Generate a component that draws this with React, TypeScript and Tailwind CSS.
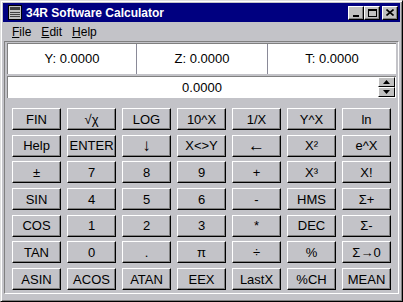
const stack = ["Y: 0.0000", "Z: 0.0000", "T: 0.0000"];

const keys: string[][] = [
  ["FIN", "√χ", "LOG", "10^X", "1/X", "Y^X", "ln"],
  ["Help", "ENTER", "↓", "X<>Y", "←", "X²", "e^X"],
  ["±", "7", "8", "9", "+", "X³", "X!"],
  ["SIN", "4", "5", "6", "-", "HMS", "Σ+"],
  ["COS", "1", "2", "3", "*", "DEC", "Σ-"],
  ["TAN", "0", ".", "π", "÷", "%", "Σ→0"],
  ["ASIN", "ACOS", "ATAN", "EEX", "LastX", "%CH", "MEAN"],
];

// arrows are drawn larger than the other labels in the original
const bigLabels = ["↓", "←"];

function CaptionButton({ children }: { children: React.ReactNode }) {
  return (
    <div className="flex h-[14px] w-[16px] items-center justify-center border border-t-white border-l-white border-r-black border-b-black bg-[#c0c0c0] shadow-[inset_-1px_-1px_#808080]">
      {children}
    </div>
  );
}

function AppIcon() {
  return (
    <svg width="14" height="15" viewBox="0 0 14 15" className="shrink-0">
      <rect x="0.5" y="0.5" width="13" height="14" fill="#c0c0c0" stroke="#000" />
      <rect x="2" y="2" width="10" height="3" fill="#404040" />
      <line x1="2" y1="7.5" x2="12" y2="7.5" stroke="#404040" />
      <line x1="2" y1="9.5" x2="12" y2="9.5" stroke="#404040" />
      <line x1="2" y1="11.5" x2="12" y2="11.5" stroke="#404040" />
    </svg>
  );
}

function Key({ label }: { label: string }) {
  const size = bigLabels.includes(label) ? "text-[17px]" : "text-[13px]";
  return (
    <div
      className={`flex h-[22px] items-center justify-center border border-t-white border-l-white border-r-black border-b-black bg-[#c3c3c8] leading-none text-black shadow-[inset_-1px_-1px_#808080] ${size}`}
    >
      {label}
    </div>
  );
}

export default function App() {
  return (
    <div
      className="flex h-[302px] w-[403px] flex-col border border-t-[#dfdfdf] border-l-[#dfdfdf] border-r-black border-b-black bg-[#c3c3c8] p-[2px] shadow-[inset_1px_1px_#fff,inset_-1px_-1px_#808080]"
      style={{ fontFamily: '"Liberation Sans", Arial, sans-serif' }}
    >
      <div className="flex h-[19px] shrink-0 items-center bg-[#000080] pl-[5px] pr-[2px]">
        <AppIcon />
        <span className="ml-[4px] text-[12px] font-bold text-white">34R Software Calculator</span>
        <div className="ml-auto flex items-center">
          <CaptionButton>
            <div className="mt-[6px] h-[2px] w-[6px] bg-black" />
          </CaptionButton>
          <CaptionButton>
            <div className="h-[8px] w-[9px] border border-t-2 border-black" />
          </CaptionButton>
          <div className="ml-[2px]">
            <CaptionButton>
              <svg width="8" height="7" viewBox="0 0 8 7">
                <path d="M0.5 0.5 L7.5 6.5 M7.5 0.5 L0.5 6.5" stroke="#000" strokeWidth="1.6" />
              </svg>
            </CaptionButton>
          </div>
        </div>
      </div>

      <div className="flex h-[19px] shrink-0 items-center gap-[10px] pl-[9px] text-[12px] text-black">
        <span><span className="underline">F</span>ile</span>
        <span><span className="underline">E</span>dit</span>
        <span><span className="underline">H</span>elp</span>
      </div>

      <div className="mx-[1px] mb-[5px] flex flex-1 flex-col border border-t-[#808080] border-l-[#808080] border-r-white border-b-white px-[2px] pt-[1px]">
        <div className="grid h-[31px] grid-cols-[129px_131px_1fr] border-t border-l border-[#808080] bg-white text-[13px] text-black">
          {stack.map((value, index) => (
            <div
              key={value}
              className={index < 2 ? "flex items-center justify-center border-r border-[#8a8a98]" : "flex items-center justify-center"}
            >
              {value}
            </div>
          ))}
        </div>

        <div className="relative mt-[2px] flex h-[22px] items-center justify-center border-t border-l border-[#808080] bg-white text-[13px] text-black">
          0.0000
          <div className="absolute right-[1px] top-[0px] flex flex-col">
            <div className="flex h-[10px] w-[17px] items-center justify-center border border-t-white border-l-white border-r-black border-b-black bg-[#c0c0c0]">
              <svg width="7" height="4" viewBox="0 0 7 4">
                <path d="M3.5 0 L7 4 L0 4 Z" fill="#000" />
              </svg>
            </div>
            <div className="flex h-[10px] w-[17px] items-center justify-center border border-t-white border-l-white border-r-black border-b-black bg-[#c0c0c0]">
              <svg width="7" height="4" viewBox="0 0 7 4">
                <path d="M0 0 L7 0 L3.5 4 Z" fill="#000" />
              </svg>
            </div>
          </div>
        </div>

        <div className="mx-[5px] mt-[10px] grid grid-cols-7 gap-x-[6px] gap-y-[4.7px]">
          {keys.flat().map((label) => (
            <Key key={label} label={label} />
          ))}
        </div>
      </div>
    </div>
  );
}
